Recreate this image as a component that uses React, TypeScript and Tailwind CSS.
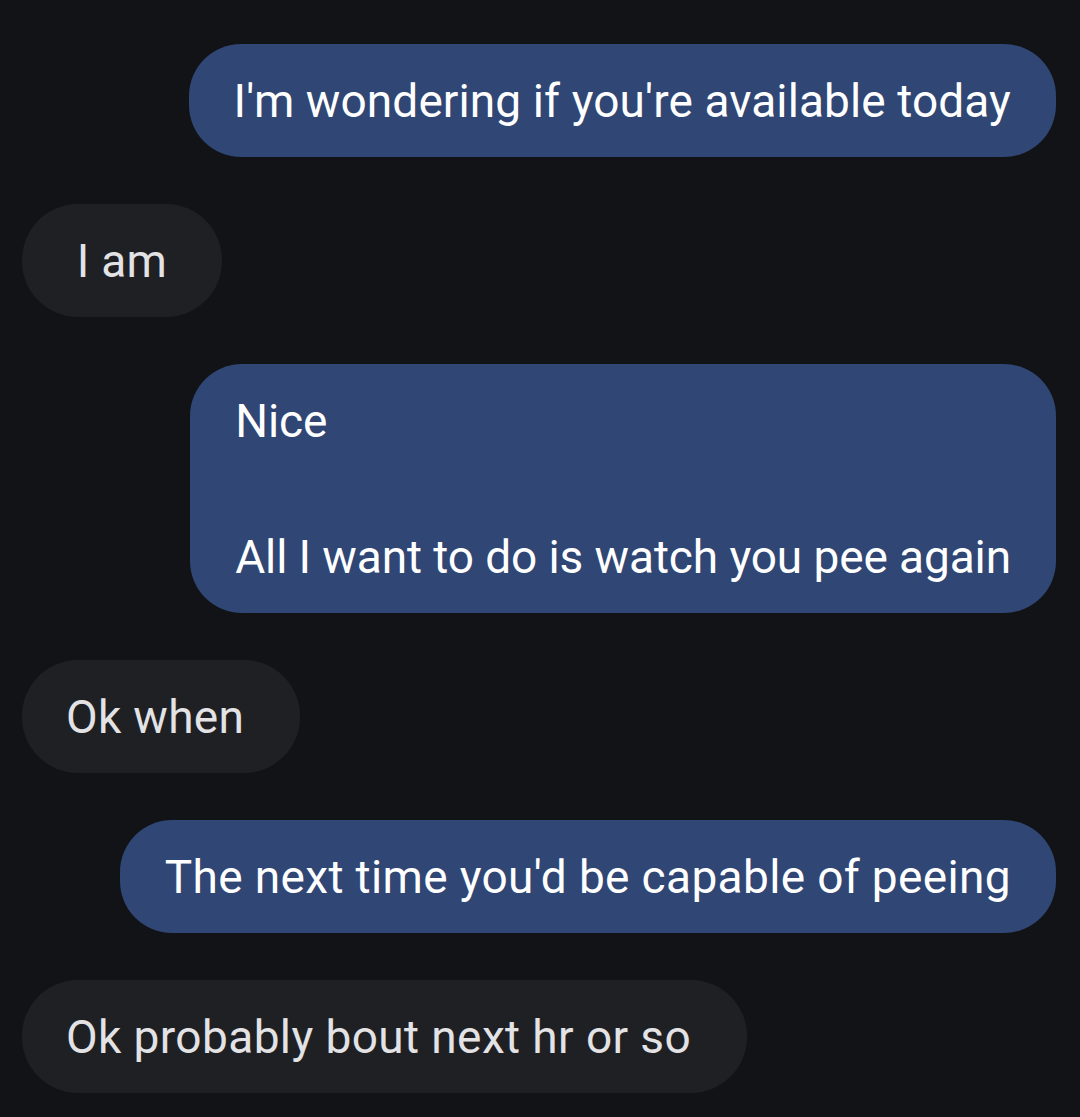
import React from "react";

type Msg = { out: boolean; lines: string[]; track: string; pad: string };

const msgs: Msg[] = [
  { out: true, lines: ["I'm wondering if you're available today"], track: "tracking-[0.1px]", pad: "px-[45px]" },
  { out: false, lines: ["I am"], track: "tracking-[0.3px]", pad: "px-[50px]" },
  { out: true, lines: ["Nice", "\u00a0", "All I want to do is watch you pee again"], track: "tracking-[-0.1px]", pad: "px-[45px]" },
  { out: false, lines: ["Ok when"], track: "tracking-[0.3px]", pad: "pl-[44px] pr-[56px]" },
  { out: true, lines: ["The next time you'd be capable of peeing"], track: "tracking-[0.35px]", pad: "px-[45px]" },
  { out: false, lines: ["Ok probably bout next hr or so"], track: "tracking-[0.4px]", pad: "pl-[44px] pr-[56px]" },
];

export default function App() {
  return (
    <div
      className="w-[1080px] h-[1117px] bg-[#121317] flex flex-col gap-[47px] pt-[44px] pl-[22px] pr-[24px] overflow-hidden"
      style={{ fontFamily: "Roboto, 'Noto Sans', sans-serif" }}
    >
      {msgs.map((m, i) => (
        <div key={i} className={m.out ? "flex justify-end" : "flex justify-start"}>
          <div
            className={
              (m.out
                ? "bg-[#304674] text-white ml-[40px] rounded-[52px]"
                : "bg-[#1f2024] text-[#e3e3e6] rounded-[56px]") +
              " py-[22.5px] min-w-[200px] text-center text-[46px] leading-[68px] " +
              m.pad +
              " " +
              m.track
            }
          >
            {m.lines.length === 1 ? (
              <div>{m.lines[0]}</div>
            ) : (
              m.lines.map((l, j) => (
                <div key={j} className="text-left">{l}</div>
              ))
            )}
          </div>
        </div>
      ))}
    </div>
  );
}
